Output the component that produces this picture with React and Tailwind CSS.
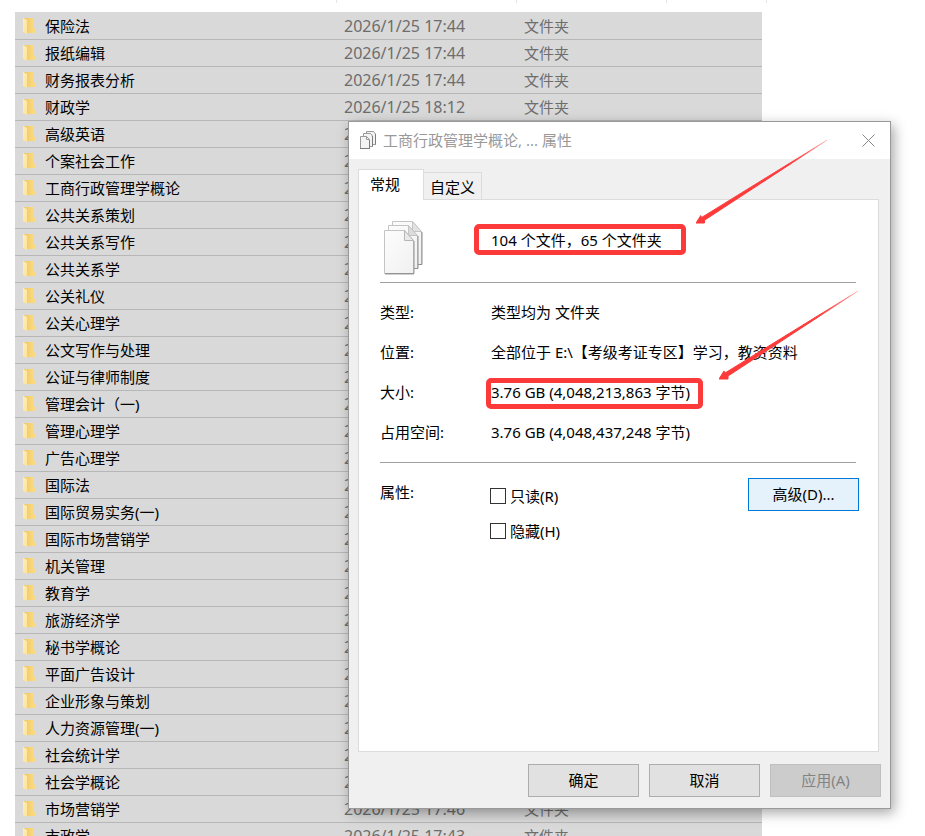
import React from 'react';

const folders = [
  ['保险法', '17:44'],
  ['报纸编辑', '17:44'],
  ['财务报表分析', '17:44'],
  ['财政学', '18:12'],
  ['高级英语', '17:44'],
  ['个案社会工作', '17:44'],
  ['工商行政管理学概论', '17:44'],
  ['公共关系策划', '17:44'],
  ['公共关系写作', '17:44'],
  ['公共关系学', '17:44'],
  ['公关礼仪', '17:44'],
  ['公关心理学', '17:44'],
  ['公文写作与处理', '17:44'],
  ['公证与律师制度', '17:44'],
  ['管理会计（一)', '17:44'],
  ['管理心理学', '17:44'],
  ['广告心理学', '17:44'],
  ['国际法', '17:44'],
  ['国际贸易实务(一)', '17:44'],
  ['国际市场营销学', '17:44'],
  ['机关管理', '17:44'],
  ['教育学', '17:44'],
  ['旅游经济学', '17:44'],
  ['秘书学概论', '17:44'],
  ['平面广告设计', '17:44'],
  ['企业形象与策划', '17:44'],
  ['人力资源管理(一)', '17:44'],
  ['社会统计学', '17:44'],
  ['社会学概论', '17:44'],
  ['市场营销学', '17:46'],
  ['市政学', '17:43'],
];

const details = [
  ['类型:', '类型均为 文件夹'],
  ['位置:', '全部位于 E:\\【考级考证专区】学习，教资资料'],
  ['大小:', '3.76 GB (4,048,213,863 字节)'],
  ['占用空间:', '3.76 GB (4,048,437,248 字节)'],
];

function FolderIcon() {
  return (
    <svg width="13" height="18" viewBox="0 0 13 18" className="shrink-0" aria-hidden="true">
      <defs>
        <linearGradient id="folderBack" x1="0" y1="0" x2="1" y2="0">
          <stop offset="0" stopColor="#f0c864" />
          <stop offset="1" stopColor="#fbdc83" />
        </linearGradient>
        <linearGradient id="folderFront" x1="0" y1="0" x2="1" y2="1">
          <stop offset="0" stopColor="#ffeeb8" />
          <stop offset="1" stopColor="#fde39a" />
        </linearGradient>
      </defs>
      <path d="M1 1H11V11L12 12V16H4Z" fill="url(#folderBack)" />
      <path d="M0 1L4 3V17L0 15Z" fill="url(#folderFront)" />
    </svg>
  );
}

function SmallPagesIcon() {
  return (
    <svg width="17" height="19" viewBox="0 0 17 19" fill="#f4f4f4" stroke="#9a9a9a" aria-hidden="true">
      <path d="M6.500 0.500H13.500L15.500 3V13.500H6.500Z" />
      <path d="M3.500 2.500H10.500L12.500 5V15.500H3.500Z" />
      <path d="M0.500 5.500H6.500L9.500 8.500V17.500H0.500Z" />
      <path d="M6.500 5.500V8.500H9.500" fill="none" />
      <path d="M0 17.500H10M9.500 9V17.500M12.500 5V15.500M15.500 3V13.500" stroke="#7c7c7c" />
    </svg>
  );
}

function LargePagesIcon() {
  return (
    <svg width="40" height="56" viewBox="0 0 40 56" aria-hidden="true">
      <defs>
        <linearGradient id="paper" x1="0" y1="0" x2="1" y2="1">
          <stop offset="0" stopColor="#fdfdfd" />
          <stop offset="1" stopColor="#f0f0f0" />
        </linearGradient>
      </defs>
      <g fill="url(#paper)" stroke="#c4c4c4">
        <path d="M8.500 1.500H28.500L37.500 12V44.500H8.500Z" />
        <path d="M28.500 1.500V11.500H37.500Z" fill="#e2e2e2" />
        <path d="M38 12V44.500H34" fill="none" stroke="#8f8f8f" />
        <path d="M4.500 5.500H24.500L33.500 16V48.500H4.500Z" />
        <path d="M24.500 5.500V15.500H33.500Z" fill="#dcdcdc" />
        <path d="M34 16V48.500H30" fill="none" stroke="#8f8f8f" />
        <path d="M0.500 10.500H20.500L29.500 20.500V53.500H0.500Z" />
        <path d="M20.500 10.500V20.500H29.500Z" fill="#e9e9e9" stroke="#b5b5b5" />
        <path d="M30 21V53.500H1" fill="none" stroke="#949494" />
        <path d="M1 54.500H30" stroke="#d0d0d0" />
      </g>
    </svg>
  );
}

function Arrow({ id, width, height, className }) {
  return (
    <svg width={width} height={height} viewBox="0 0 142 92" className={className} aria-hidden="true">
      <defs>
        <linearGradient id={id} gradientUnits="userSpaceOnUse" x1="0" y1="88" x2="140" y2="0">
          <stop offset="0.700" stopColor="#fd3a3a" />
          <stop offset="1" stopColor="#fd3a3a" stopOpacity="0.150" />
        </linearGradient>
      </defs>
      <path d="M0 89L5 81L6 83L139 1L9 86L9 89Z" fill={`url(#${id})`} stroke={`url(#${id})`} strokeWidth="1" strokeLinejoin="round" />
    </svg>
  );
}

function FileList() {
  return (
    <div className="pr-[158px] pl-[15px]">
      <div className="mb-[9px] flex h-[3px]">
        <div className="w-[322px] border-r border-[#e5e5e5]" />
        <div className="w-[180px] border-r border-[#e5e5e5]" />
        <div className="w-[150px] border-r border-[#e5e5e5]" />
        <div className="grow border-r border-[#e5e5e5]" />
      </div>
      <div className="pr-[5px]">
        <table className="w-full table-fixed border-collapse bg-[#d9d9d9]">
          <colgroup>
            <col className="w-[329px]" />
            <col className="w-[180px]" />
            <col />
          </colgroup>
          <tbody>
            {folders.map(([name, time], i) => (
              <tr key={name} className={i ? 'h-[27px] shadow-[inset_0_1px_0_#b7b7b7]' : 'h-[27px]'}>
                <td className="p-0 pl-2">
                  <div className="flex items-center gap-[9px]">
                    <FolderIcon />
                    <span className="leading-5 whitespace-nowrap">{name}</span>
                  </div>
                </td>
                <td className="p-0 text-base leading-5 text-[#6d6d6d]">2026/1/25 {time}</td>
                <td className="p-0 leading-5 text-[#6d6d6d]">文件夹</td>
              </tr>
            ))}
          </tbody>
        </table>
      </div>
    </div>
  );
}

function PropertiesDialog() {
  return (
    <section
      role="dialog"
      aria-label="属性"
      className="absolute top-[121px] left-[348px] w-[543px] border border-[#999] bg-[#f0f0f0] shadow-[3px_4px_12px_rgba(0,0,0,0.35)]"
    >
      <header className="flex h-[37px] items-center bg-white pr-[14px] pb-px pl-[11px] text-[#999]">
        <SmallPagesIcon />
        <h1 className="ml-[6px] grow leading-5">工商行政管理学概论, ... 属性</h1>
        <button type="button" aria-label="关闭" className="p-px">
          <svg width="13" height="13" viewBox="0 0 13 13" stroke="#888" fill="none" aria-hidden="true">
            <path d="M0.500 0.500L12.500 12.500M12.500 0.500L0.500 12.500" />
          </svg>
        </button>
      </header>

      <div className="px-[9px] pt-[10px] pb-[11px]">
        <div role="tablist" className="flex h-[31px] items-end">
          <button type="button" role="tab" aria-selected="true" className="z-10 h-[31px] w-[66px] border border-b-0 border-[#dcdcdc] bg-white pr-3 pb-0.5 leading-5">
            常规
          </button>
          <button type="button" role="tab" aria-selected="false" className="mb-px -ml-px h-[27px] w-[59px] border border-b-0 border-[#dcdcdc] pt-0.5 leading-5">
            自定义
          </button>
        </div>

        <div role="tabpanel" className="-mt-px min-h-[553px] w-[521px] border border-[#dcdcdc] bg-white pr-[22px] pl-[21px]">
          <div className="flex h-[83px] items-start border-b border-[#a0a0a0]">
            <div className="w-[111px] pt-5 pl-1">
              <LargePagesIcon />
            </div>
            <p className="leading-[80px]">104 个文件，65 个文件夹</p>
          </div>

          <dl className="border-b border-[#a0a0a0] pt-[9px] pb-[10px]">
            {details.map(([label, value]) => (
              <div key={label} className="flex h-10 items-center leading-5">
                <dt className="w-[111px] shrink-0">{label}</dt>
                <dd className="whitespace-nowrap">{value}</dd>
              </div>
            ))}
          </dl>

          <div className="-mr-[3px] flex items-start pt-[15px] leading-5">
            <span className="w-[110px] pt-1">属性:</span>
            <div className="flex grow flex-col gap-[15px] pt-2">
              <label className="flex items-center gap-1">
                <input type="checkbox" className="size-4 appearance-none border border-[#333] bg-white" />
                只读(R)
              </label>
              <label className="flex items-center gap-1">
                <input type="checkbox" className="size-4 appearance-none border border-[#333] bg-white" />
                隐藏(H)
              </label>
            </div>
            <button type="button" className="h-[33px] w-[111px] border border-[#0078d7] bg-[#e5f1fb] pb-0.5">
              高级(D)...
            </button>
          </div>
        </div>

        <footer className="mt-3 flex justify-end gap-[10px] leading-5">
          <button type="button" className="h-[33px] w-[111px] border border-[#adadad] bg-[#e1e1e1] pb-0.5">确定</button>
          <button type="button" className="h-[33px] w-[111px] border border-[#adadad] bg-[#e1e1e1] pb-0.5">取消</button>
          <button type="button" disabled className="h-[33px] w-[111px] border border-[#bfbfbf] bg-[#ccc] pb-0.5 text-[#838383]">应用(A)</button>
        </footer>
      </div>

      <div className="pointer-events-none absolute top-[102px] left-[125px] h-[31px] w-[212px] rounded-[5px] border-[5px] border-[#fd3a3a]" />
      <div className="pointer-events-none absolute top-[256px] left-[137px] h-[31px] w-[217px] rounded-[5px] border-[5px] border-[#fd3a3a]" />
      <Arrow id="arrowCount" width={134} height={87} className="pointer-events-none absolute top-[17px] left-[347px]" />
      <Arrow id="arrowSize" width={142} height={92} className="pointer-events-none absolute top-[168px] left-[370px]" />
    </section>
  );
}

export default function App() {
  return (
    <main className="relative h-screen overflow-hidden bg-white font-['Noto_Sans','Noto_Sans_CJK_SC',sans-serif] text-[15px] text-black">
      <FileList />
      <PropertiesDialog />
    </main>
  );
}
